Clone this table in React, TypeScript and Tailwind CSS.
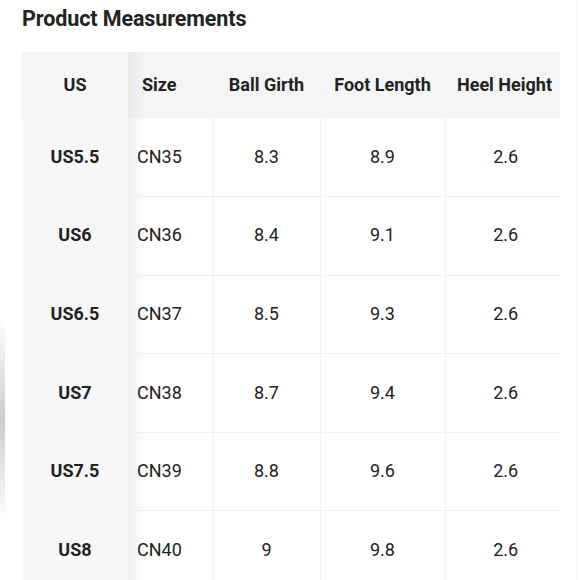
import React from "react";

const rows = [
  ["US5.5", "CN35", "8.3", "8.9", "2.6"],
  ["US6", "CN36", "8.4", "9.1", "2.6"],
  ["US6.5", "CN37", "8.5", "9.3", "2.6"],
  ["US7", "CN38", "8.7", "9.4", "2.6"],
  ["US7.5", "CN39", "8.8", "9.6", "2.6"],
  ["US8", "CN40", "9", "9.8", "2.6"],
];

export default function App() {
  return (
    <div
      className="relative h-[580px] w-[580px] overflow-hidden bg-white text-[#222]"
      style={{ fontFamily: "Roboto, 'Liberation Sans', sans-serif" }}
    >
      <div className="absolute left-0 top-[320px] h-[200px] w-[5px] bg-gradient-to-b from-transparent via-[#b5b5b5] to-transparent opacity-70" />
      <div className="absolute right-[3px] top-0 h-full w-px bg-[#f2f2f2]" />
      <div className="pl-[22px] pt-[5px]">
        <h1 className="text-[21.5px] font-bold leading-[28px] tracking-[-0.1px]">
          Product Measurements
        </h1>
        <table className="mt-[19px] table-fixed border-collapse text-[18px]">
          <colgroup>
            <col className="w-[106px]" />
            <col className="w-[85px]" />
            <col className="w-[107px]" />
            <col className="w-[125px]" />
            <col className="w-[115px]" />
          </colgroup>
          <thead>
            <tr className="h-[66px] bg-[#f5f5f5]">
              <th className="bg-[#f6f6f6] pb-[2px] text-center font-bold">US</th>
              <th className="bg-[linear-gradient(to_right,#e9e9e9,#f5f5f5_18px)] pb-[2px] pl-[14px] text-left font-bold">
                Size
              </th>
              <th className="pb-[2px] text-center font-bold">Ball Girth</th>
              <th className="pb-[2px] text-center font-bold">Foot Length</th>
              <th className="pb-[2px] pl-[4px] text-center font-bold">Heel Height</th>
            </tr>
          </thead>
          <tbody>
            {rows.map((r, i) => (
              <tr key={i} className="h-[78.6px]">
                <td className="bg-[#f7f7f7] pb-[2px] text-center font-bold">{r[0]}</td>
                <td className="border-b border-[#efefef] bg-[linear-gradient(to_right,#efefef,#ffffff_18px)] pb-[2px] pl-[9px] text-left">
                  {r[1]}
                </td>
                <td className="border-b border-l border-[#f2f2f2] pb-[2px] text-center">{r[2]}</td>
                <td className="border-b border-l border-[#f2f2f2] pb-[2px] text-center">{r[3]}</td>
                <td className="border-b border-l border-[#f2f2f2] pb-[2px] pl-[6px] text-center">{r[4]}</td>
              </tr>
            ))}
          </tbody>
        </table>
      </div>
    </div>
  );
}
